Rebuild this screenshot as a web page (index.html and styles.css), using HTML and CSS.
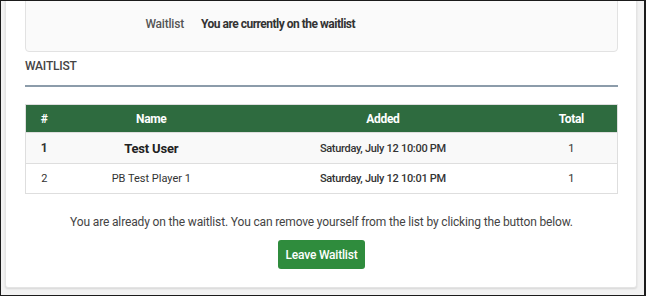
FILE: index.html
```html
<!DOCTYPE html>
<html lang="en">
<head>
    <meta charset="UTF-8">
    <meta name="viewport" content="width=device-width, initial-scale=1.0">
    <title>Waitlist</title>
    <link rel="stylesheet" href="styles.css">
</head>
<body>
    <div class="frame">
        <div class="card">
            <div class="status-panel">
                <div class="status-row">
                    <span class="status-label">Waitlist</span>
                    <span class="status-value">You are currently on the waitlist</span>
                </div>
            </div>
            <h4 class="section-title">WAITLIST</h4>
            <table class="waitlist-table">
                <thead>
                    <tr>
                        <th class="col-num">#</th>
                        <th class="col-name">Name</th>
                        <th class="col-added">Added</th>
                        <th class="col-total">Total</th>
                    </tr>
                </thead>
                <tbody>
                    <tr class="me">
                        <td class="pos">1</td>
                        <td class="name">Test User</td>
                        <td class="date">Saturday, July 12 10:00 PM</td>
                        <td>1</td>
                    </tr>
                    <tr>
                        <td>2</td>
                        <td>PB Test Player 1</td>
                        <td class="date">Saturday, July 12 10:01 PM</td>
                        <td>1</td>
                    </tr>
                </tbody>
            </table>
            <p class="note">You are already on the waitlist. You can remove yourself from the list by clicking the button below.</p>
            <div class="actions">
                <button class="btn-leave">Leave Waitlist</button>
            </div>
        </div>
    </div>
</body>
</html>
```

FILE: styles.css
```css
* {
    box-sizing: border-box;
    margin: 0;
    padding: 0;
}
body {
    font-family: Roboto, "Liberation Sans", sans-serif;
    background-color: #1b1b1b;
}
.frame {
    height: 296px;
    overflow: hidden;
    border: 1px solid #1b1b1b;
    border-right-width: 2px;
    background-color: #f2f2f2;
    padding: 0 7px 7px 4px;
}
.card {
    margin-top: -14px;
    background: #fff;
    border: 1px solid #e4e4e4;
    border-radius: 3px;
    box-shadow: 0 1px 2px rgba(0, 0, 0, 0.12);
    padding: 0 18px 18px 19px;
}
.status-panel {
    background: #fafafa;
    border: 1px solid #e2e2e2;
    border-radius: 4px;
    padding: 28px 0 20px;
}
.status-row {
    display: flex;
    align-items: center;
    gap: 17px;
    font-size: 12px;
}
.status-label {
    width: 158px;
    text-align: right;
    color: #555;
    font-weight: 500;
    letter-spacing: -0.2px;
}
.status-value {
    color: #333;
    font-weight: 700;
    letter-spacing: -0.5px;
}
.section-title {
    font-size: 12px;
    font-weight: 500;
    color: #444;
    letter-spacing: -0.2px;
    padding: 7px 0 12px;
    border-bottom: 2px solid #8c9caa;
    margin-bottom: 17px;
}
.waitlist-table {
    width: 100%;
    border-collapse: collapse;
    border: 1px solid #dedede;
    font-size: 11px;
    color: #333;
}
.waitlist-table th {
    background: #2e6b3f;
    color: #fff;
    font-weight: 700;
    font-size: 12px;
    letter-spacing: -0.3px;
    height: 28px;
    text-align: center;
}
.waitlist-table td {
    text-align: center;
    height: 30px;
    border-top: 1px solid #dedede;
}
.col-num { width: 37px; }
.col-name { width: 178px; }
.col-added { width: 286px; }
.col-total { width: 92px; }
.waitlist-table tr.me {
    background: #f9f9f9;
}
.waitlist-table tr.me td {
    height: 31px;
}
.waitlist-table td.pos {
    font-weight: 700;
    font-size: 12px;
}
.waitlist-table td.name {
    font-weight: 700;
    font-size: 13px;
    letter-spacing: -0.2px;
    color: #222;
}
.waitlist-table td.date {
    font-size: 11px;
    font-weight: 500;
    letter-spacing: -0.3px;
}
.note {
    text-align: center;
    font-size: 12px;
    color: #444;
    letter-spacing: -0.15px;
    margin-top: 21px;
}
.actions {
    text-align: center;
    margin-top: 11px;
}
.btn-leave {
    background: #2f8c3d;
    color: #fff;
    border: none;
    border-radius: 3px;
    font-family: inherit;
    font-size: 12px;
    font-weight: 500;
    letter-spacing: -0.2px;
    width: 87px;
    height: 29px;
    cursor: pointer;
}
```
